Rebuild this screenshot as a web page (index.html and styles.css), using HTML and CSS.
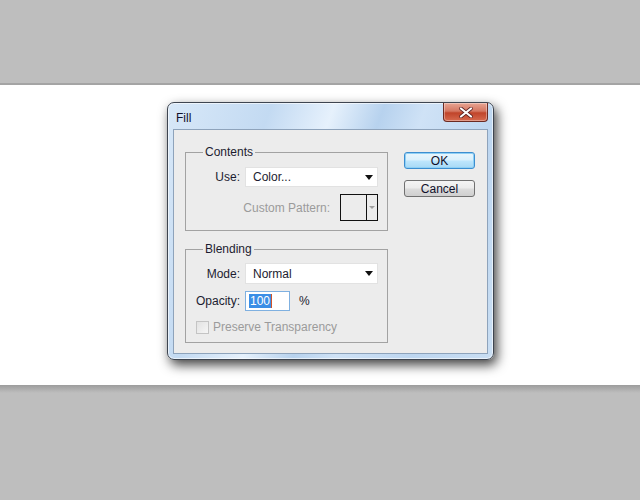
FILE: index.html
```html
<!DOCTYPE html>
<html lang="en">
<head>
    <meta charset="UTF-8">
    <title>Fill</title>
    <link rel="stylesheet" href="styles.css">
</head>
<body>
    <div class="band-top"></div>
    <div class="stage">
        <div class="dialog">
            <div class="titlebar">
                <span class="title">Fill</span>
                <div class="close-btn">
                    <svg width="16" height="11" viewBox="0 0 16 11">
                        <path d="M3 1.5 L13 9.5 M13 1.5 L3 9.5" stroke="#5a2020" stroke-width="3.6" stroke-linecap="round"/>
                        <path d="M3 1.5 L13 9.5 M13 1.5 L3 9.5" stroke="#ffffff" stroke-width="2.2" stroke-linecap="round"/>
                    </svg>
                </div>
            </div>
            <div class="client">
                <div class="groups">
                    <fieldset class="group">
                        <legend>Contents</legend>
                        <div class="row">
                            <span class="label">Use:</span>
                            <div class="select"><span>Color...</span><span class="arrow"></span></div>
                        </div>
                        <div class="row pattern-row">
                            <span class="label disabled">Custom Pattern:</span>
                            <div class="swatch"><span class="swatch-fill"></span><span class="swatch-drop"><span class="arrow small"></span></span></div>
                        </div>
                    </fieldset>
                    <fieldset class="group blending">
                        <legend>Blending</legend>
                        <div class="row">
                            <span class="label">Mode:</span>
                            <div class="select tall"><span>Normal</span><span class="arrow"></span></div>
                        </div>
                        <div class="row">
                            <span class="label">Opacity:</span>
                            <div class="text-input"><span class="selected">100</span><span class="caret"></span></div>
                            <span class="unit">%</span>
                        </div>
                        <div class="check-row">
                            <span class="checkbox"></span>
                            <span class="disabled">Preserve Transparency</span>
                        </div>
                    </fieldset>
                </div>
                <div class="buttons">
                    <div class="btn default">OK</div>
                    <div class="btn">Cancel</div>
                </div>
            </div>
        </div>
    </div>
    <div class="band-bottom"></div>
</body>
</html>
```

FILE: styles.css
```css
body, html {
    margin: 0;
    padding: 0;
    height: 100%;
    background-color: #bebebe;
    font-family: "Liberation Sans", Arial, sans-serif;
    font-size: 12px;
    color: #1c1c30;
}
.band-top {
    height: 83px;
    background-color: #bebebe;
    border-bottom: 2px solid #a4a4a4;
}
.stage {
    height: 300px;
    background-color: #ffffff;
    padding: 17px 0 0 167px;
    box-sizing: border-box;
}
.band-bottom {
    height: 8px;
    background: linear-gradient(to bottom, #9c9c9c, #bebebe);
}
.dialog {
    width: 327px;
    height: 258px;
    box-sizing: border-box;
    border: 1px solid #3e4550;
    border-radius: 7px;
    background: linear-gradient(110deg, #d8e8f8 0%, #c3daf2 25%, #e6f1fc 40%, #b7d2ee 52%, #cfe2f6 62%, #bdd6f0 80%, #c9def3 100%);
    box-shadow: 3px 5px 12px rgba(0, 0, 0, 0.75), inset 0 0 0 1px rgba(255, 255, 255, 0.6);
    display: flex;
    flex-direction: column;
    padding: 0 5px 5px 5px;
}
.titlebar {
    height: 26px;
    display: flex;
    justify-content: space-between;
    align-items: flex-start;
}
.title {
    margin: 8px 0 0 3px;
    font-size: 12px;
    color: #10102a;
}
.close-btn {
    width: 45px;
    height: 19px;
    box-sizing: border-box;
    border: 1px solid #6b2a22;
    border-top: none;
    border-radius: 0 0 4px 4px;
    background: linear-gradient(to bottom, #e8a593 0%, #d47762 45%, #c0442a 55%, #d66a4f 100%);
    box-shadow: inset 0 0 0 1px rgba(255, 255, 255, 0.35);
    display: flex;
    align-items: center;
    justify-content: center;
}
.client {
    flex: 1;
    border: 1px solid #8ea3bb;
    background-color: #ececec;
    display: flex;
    gap: 16px;
    padding: 15px 12px 0 11px;
}
.groups {
    width: 203px;
    display: flex;
    flex-direction: column;
    gap: 11px;
}
.group {
    margin: 0;
    border: 1px solid #a2a2a2;
    padding: 8px 9px 9px 0;
}
.group legend {
    margin-left: 17px;
    padding: 0 2px 0 2px;
    line-height: 14px;
    font-size: 12px;
    color: #1c1c30;
}
.blending {
    padding-top: 7px;
    padding-bottom: 8px;
}
.row {
    display: flex;
    align-items: center;
    gap: 5px;
    margin-bottom: 7px;
}
.label {
    width: 54px;
    text-align: right;
}
.pattern-row {
    justify-content: flex-end;
    gap: 10px;
    margin-bottom: 0;
}
.pattern-row .label {
    width: auto;
}
.disabled {
    color: #9b9b9b;
}
.select {
    width: 133px;
    height: 20px;
    box-sizing: border-box;
    background-color: #ffffff;
    border: 1px solid #e2e2e2;
    display: flex;
    align-items: center;
    justify-content: space-between;
    padding: 0 4px 0 7px;
}
.select.tall {
    height: 21px;
}
.arrow {
    width: 0;
    height: 0;
    border-left: 4px solid transparent;
    border-right: 4px solid transparent;
    border-top: 5px solid #111111;
}
.arrow.small {
    border-left-width: 3px;
    border-right-width: 3px;
    border-top: 3px solid #a0a0a0;
}
.swatch {
    width: 38px;
    height: 27px;
    box-sizing: border-box;
    border: 1px solid #111111;
    display: flex;
}
.swatch-fill {
    flex: 1;
    background-color: #ececec;
    border-right: 1px solid #111111;
}
.swatch-drop {
    width: 10px;
    display: flex;
    align-items: center;
    justify-content: center;
}
.text-input {
    width: 45px;
    height: 20px;
    box-sizing: border-box;
    background-color: #ffffff;
    border: 1px solid #7fb0e0;
    display: flex;
    align-items: center;
    padding-left: 3px;
}
.selected {
    background-color: #3a8ee6;
    color: #ffffff;
    line-height: 14px;
    padding: 0 1px;
}
.caret {
    width: 1px;
    height: 14px;
    background-color: #d2542a;
}
.unit {
    margin-left: 4px;
}
.check-row {
    display: flex;
    align-items: center;
    gap: 4px;
    margin: 9px 0 0 10px;
}
.checkbox {
    width: 11px;
    height: 11px;
    border: 1px solid #c4c4c4;
    background: linear-gradient(to bottom right, #e2e2e2, #f6f6f6);
}
.buttons {
    display: flex;
    flex-direction: column;
    gap: 11px;
    padding-top: 7px;
}
.btn {
    width: 71px;
    height: 17px;
    box-sizing: border-box;
    border: 1px solid #707070;
    border-radius: 3px;
    background: linear-gradient(to bottom, #f4f4f4 0%, #ebebeb 48%, #dcdcdc 52%, #cfcfcf 100%);
    display: flex;
    align-items: center;
    justify-content: center;
    color: #10102a;
}
.btn.default {
    border-color: #3c8ed0;
    background: linear-gradient(to bottom, #eaf6fd 0%, #d9f0fc 48%, #bee6fd 52%, #a7d9f5 100%);
    box-shadow: inset 0 0 0 1px #8fd0f5;
}
```
